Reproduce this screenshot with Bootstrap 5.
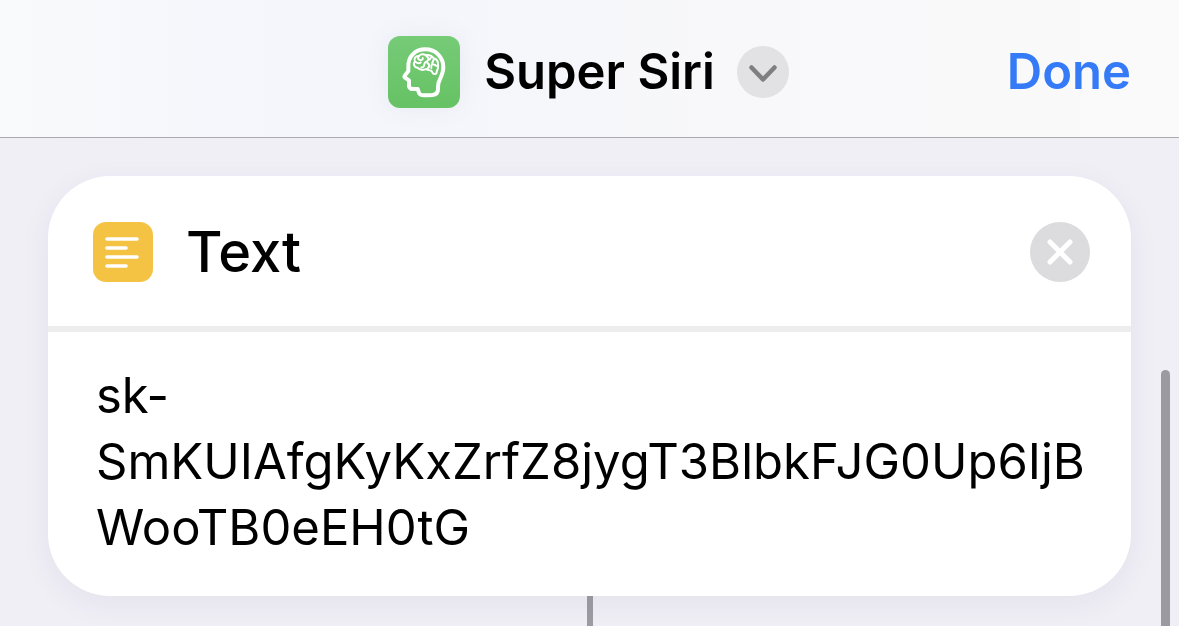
<!DOCTYPE html>
<html lang="en">
<head>
<meta charset="utf-8">
<meta name="viewport" content="width=device-width, initial-scale=1">
<title>Super Siri</title>
<link href="https://cdn.jsdelivr.net/npm/bootstrap@5.3.0/dist/css/bootstrap.min.css" rel="stylesheet">
<style>
  body { font-family: Inter, "Liberation Sans", sans-serif; background: #f0eff6; color: #000; }
  .topbar { height: 138px; padding: 7px 48px 0; border-bottom: 1px solid #aaaab0;
    background: linear-gradient(90deg, #f9fafb 0%, #f4f6fc 25%, #f5f6fb 38%, #f8f8fa 62%, #fafafa 100%); }
  .topbar-side { flex: 1 1 0; }
  .topbar-title { font-size: 49px; line-height: 60px; font-weight: 600; }
  .app-icon { width: 72px; height: 72px; border-radius: 12px; background: linear-gradient(#76cb77, #66c264); box-shadow: 0 0 24px rgba(80, 100, 140, .08); margin-right: 24px; }
  .round-btn { border: 0; padding: 0; border-radius: 50%; }
  .menu-btn { width: 52px; height: 52px; background: #e2e2e4; margin: 0 2px 0 22px; }
  .done-btn { color: #357af6; font-size: 49px; line-height: 60px; font-weight: 600; }
  .workspace { padding: 38px 48px 0; }
  .action-card { border: 0; border-radius: 62px; box-shadow: 0 8px 32px rgba(40, 30, 90, .06); }
  .action-head { height: 156px; padding: 2px 41px 0 45px; border-bottom: 6px solid #ededed; }
  .action-icon { width: 60px; height: 60px; border-radius: 13px; background: #f5c344; }
  .action-title { font-size: 56px; line-height: 70px; font-weight: 500; margin-left: 33px; }
  .clear-btn { width: 60px; height: 60px; background: #dcdcde; }
  .action-text { padding: 31px 40px 35px 48px; border: 0; border-radius: 0 0 62px 62px; background: transparent; color: #000; font-size: 49px; line-height: 66px; resize: none; outline: 0; overflow: hidden; }
  .connector { width: 6px; height: 30px; background: #9d9ca4; }
  .scroll-thumb { right: 9px; top: 370px; bottom: 0; width: 9px; border-radius: 5px 5px 0 0; background: #9b9aa0; }
</style>
</head>
<body class="vh-100 overflow-hidden">
<header class="topbar d-flex align-items-center">
  <div class="topbar-side"></div>
  <div class="d-flex align-items-center">
    <svg class="app-icon" viewBox="51 48 216 216" fill="none" stroke="#fff" stroke-linecap="round" stroke-linejoin="round" aria-hidden="true">
      <path stroke-width="12" d="M112 142C110 108 134 88 163 88C195 88 217 112 217 142C217 160 208 174 203 187C200 197 202 207 200 214C197 225 187 226 172 226H158C146 226 144 221 140 207C128 207 116 210 114 200V181L102 173Q99 170 102 166L112 153Z"/>
      <path stroke-width="6" d="M144 108C134 107 127 116 132 124C125 131 130 143 140 143C146 151 158 151 165 147C174 155 181 146 184 157C187 164 197 164 197 156C198 150 203 145 201 137C202 126 197 117 188 115C181 104 170 106 164 105C156 102 148 103 144 108ZM144 109C138 114 142 119 147 120C153 122 157 117 155 114M134 126Q141 132 149 128M164 106C170 111 175 116 171 121C165 128 161 124 160 133C159 141 154 143 151 142M172 120Q178 119 179 114M169 129C176 132 177 140 169 146M188 116C190 122 183 124 184 130C186 136 193 133 196 138M184 131Q179 136 181 144"/>
    </svg>
    <h1 class="topbar-title mb-0 text-nowrap">Super Siri</h1>
    <button type="button" class="round-btn menu-btn d-flex align-items-center justify-content-center" aria-label="Shortcut options">
      <svg width="52" height="52" viewBox="0 0 52 52" fill="none" stroke="#7f7f81" stroke-width="4.500" stroke-linecap="round" stroke-linejoin="round"><path d="M14.500 21.500 26 33.500 37.500 21.500"/></svg>
    </button>
  </div>
  <div class="topbar-side d-flex justify-content-end">
    <button type="button" class="done-btn btn border-0 p-0">Done</button>
  </div>
</header>
<main class="workspace">
  <section class="action-card card">
    <div class="action-head d-flex align-items-center">
      <svg class="action-icon" viewBox="0 0 60 60" fill="none" stroke="#fff" stroke-width="3.600" stroke-linecap="round" aria-hidden="true"><path d="M14 17H44M14 26H33M14 35H44M14 44H33"/></svg>
      <label class="action-title" for="text-value">Text</label>
      <button type="button" class="round-btn clear-btn ms-auto" aria-label="Remove action">
        <svg class="d-block" width="60" height="60" viewBox="0 0 60 60" fill="none" stroke="#fff" stroke-width="5" stroke-linecap="round"><path d="M20 20 40 40M40 20 20 40"/></svg>
      </button>
    </div>
    <textarea id="text-value" class="action-text w-100 d-block" rows="3" spellcheck="false">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</textarea>
  </section>
  <div class="connector mx-auto"></div>
</main>
<div class="scroll-thumb position-fixed"></div>
<script src="https://cdn.jsdelivr.net/npm/bootstrap@5.3.0/dist/js/bootstrap.bundle.min.js"></script>
</body>
</html>
